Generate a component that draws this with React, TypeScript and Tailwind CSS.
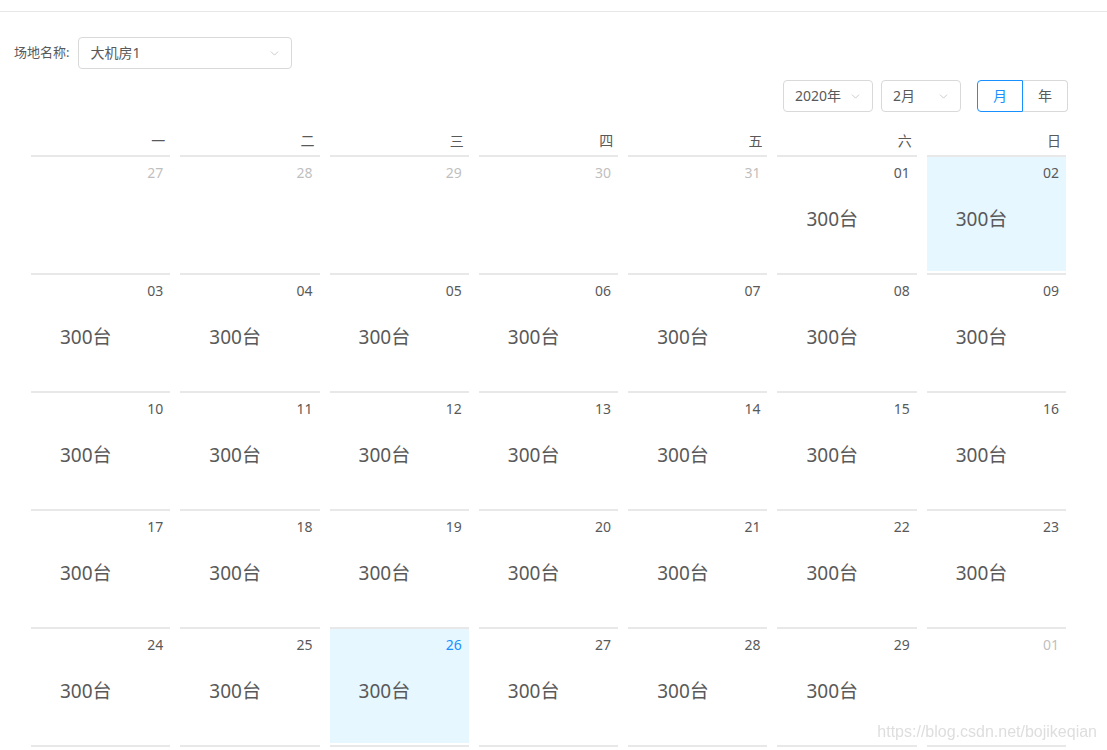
import { ChevronDown } from "lucide-react";

type Day = { d: string; cur: boolean; sel?: boolean; today?: boolean };

const weekdays = ["一", "二", "三", "四", "五", "六", "日"];

const buildWeeks = (): Day[][] => {
  const days: Day[] = [];
  ["27", "28", "29", "30", "31"].forEach((d) => days.push({ d, cur: false }));
  for (let i = 1; i <= 29; i++) {
    days.push({
      d: String(i).padStart(2, "0"),
      cur: true,
      sel: i === 2,
      today: i === 26,
    });
  }
  for (let i = 1; i <= 8; i++) days.push({ d: String(i).padStart(2, "0"), cur: false });
  const weeks: Day[][] = [];
  for (let w = 0; w < 6; w++) weeks.push(days.slice(w * 7, w * 7 + 7));
  return weeks;
};

const Select = ({ value, width }: { value: string; width: string }) => (
  <div
    className={`flex h-8 items-center justify-between rounded border border-[#d9d9d9] bg-white pl-[11px] pr-[10px] text-sm text-[#595959] ${width}`}
  >
    <span>{value}</span>
    <ChevronDown size={13} strokeWidth={1.5} className="text-[#bfbfbf]" />
  </div>
);

const DateCell = ({ day }: { day: Day }) => (
  <div className="px-[5px] pb-[2px]">
    <div
      className={`h-[116px] border-t-2 border-[#e8e8e8] pl-2 pr-[7px] pt-1 ${
        day.sel || day.today ? "bg-[#e6f7ff]" : "bg-white"
      }`}
    >
      <div
        className={`text-right text-sm leading-6 ${
          day.today ? "text-[#1890ff]" : day.cur ? "text-[#595959]" : "text-[#bfbfbf]"
        }`}
      >
        {day.d}
      </div>
      {day.cur && (
        <div className="pl-[21px] pt-[22px] text-[19px] leading-6 text-[#595959]">300台</div>
      )}
    </div>
  </div>
);

export default function App() {
  const weeks = buildWeeks();
  return (
    <div
      className="relative min-h-screen bg-white text-[#595959]"
      style={{ fontFamily: '"Noto Sans", "Noto Sans CJK SC", sans-serif' }}
    >
      <div className="h-[12px] border-b border-[#e8e8e8]" />

      {/* Filter */}
      <div className="mt-[25px] flex items-center pl-[14px]">
        <span className="mr-[9px] text-[13px] text-[#595959]">场地名称:</span>
        <Select value="大机房1" width="w-[214px]" />
      </div>

      <div className="pl-[26px] pr-[36px]">
        {/* Calendar header */}
        <div className="mt-[11px] flex items-center justify-end pr-[3px]">
          <Select value="2020年" width="w-[90px]" />
          <div className="ml-2">
            <Select value="2月" width="w-[80px]" />
          </div>
          <div className="ml-4 flex h-8 text-sm">
            <div className="flex w-[46px] items-center justify-center rounded-l border border-[#1890ff] text-[#1890ff]">
              月
            </div>
            <div className="flex w-[45px] items-center justify-center rounded-r border border-l-0 border-[#d9d9d9] text-[#595959]">
              年
            </div>
          </div>
        </div>

        {/* Weekdays */}
        <div className="mt-[11px] grid grid-cols-7">
          {weekdays.map((w) => (
            <div key={w} className="flex h-[32px] items-end justify-end pb-[5px] pr-[4px] text-sm leading-[18px] text-[#595959]">
              <span className="pr-[6px]">{w}</span>
            </div>
          ))}
        </div>

        {/* Dates */}
        <div className="grid grid-cols-7">
          {weeks.flat().map((day, i) => (
            <DateCell key={i} day={day} />
          ))}
        </div>
      </div>

      <div
        className="fixed bottom-[6px] right-[10px] text-[16px] text-[#dedede]"
        style={{ fontFamily: '"Liberation Sans", sans-serif' }}
      >
        https://blog.csdn.net/bojikeqian
      </div>
    </div>
  );
}
